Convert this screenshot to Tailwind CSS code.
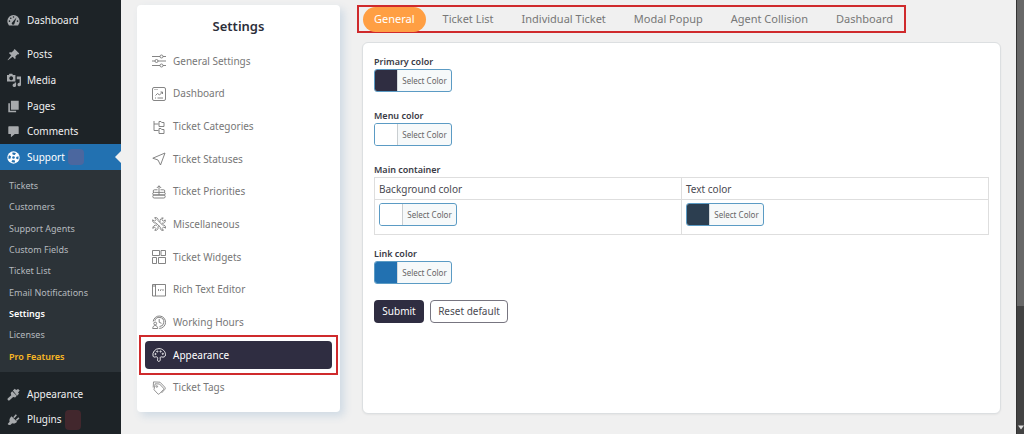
<!DOCTYPE html>
<html lang="en">
<head>
  <meta charset="UTF-8">
  <meta name="viewport" content="width=device-width, initial-scale=1.0">
  <title>Settings - Support</title>
  <script src="https://cdn.jsdelivr.net/npm/@tailwindcss/browser@4"></script>
</head>
<body class="bg-[#f0f0f0] font-['Noto_Sans','Open_Sans',sans-serif] text-[10px]">
  <div class="flex min-h-screen">

    <!-- Admin menu -->
    <nav class="w-[121px] shrink-0 bg-[#1d2327] text-[#f0f0f1]">
      <ul class="pt-[7px]">
        <li class="mb-2">
          <a href="#" class="flex h-[26px] items-center gap-[7px] px-[7px]">
            <svg class="size-[13px]" viewBox="0 0 20 20"><path fill="#a7aaad" d="M3 17.500a9.500 9.500 0 1 1 14 0Z"/><g fill="#1d2327"><circle cx="10" cy="4.500" r="1.200"/><circle cx="5.800" cy="6.500" r="1.200"/><circle cx="3.800" cy="11" r="1.200"/><circle cx="16.200" cy="11" r="1.200"/><path d="M14.500 5.500 8.300 12.500a2.200 2.200 0 1 0 3.300 1.900Z"/></g></svg>
            Dashboard
          </a>
        </li>
        <li>
          <a href="#" class="flex h-[26px] items-center gap-[7px] px-[7px]">
            <svg class="size-[13px] text-[#a7aaad]" viewBox="0 0 20 20" fill="currentColor"><path d="m10.400 3 1.400-1.400 7 7-1.400 1.400-1.300-.2-3.300 3.400c.8 1.500.6 3-.4 4l-3.700-3.700L1.500 19l-.6-.6 5.600-7.100L2.800 7.500c1.100-1 2.600-1.200 4-.4l3.500-3.300Z"/></svg>
            Posts
          </a>
        </li>
        <li>
          <a href="#" class="flex h-[26px] items-center gap-[7px] px-[7px]">
            <svg class="size-[14px] -mr-px text-[#a7aaad]" viewBox="0 0 20 20" fill="currentColor"><path fill-rule="evenodd" d="M0 3h2.500l1-2h4l1 2H12v9H0Zm6 1.800a2.700 2.700 0 1 0 .01 0Z"/><path d="M14 5h6v11.500a2.500 2.500 0 1 1-2-2.400V9h-4ZM11 13.500h2v4a2.500 2.500 0 1 1-2-2.400Z"/></svg>
            Media
          </a>
        </li>
        <li>
          <a href="#" class="flex h-[26px] items-center gap-[7px] px-[7px]">
            <svg class="size-[13px] text-[#a7aaad]" viewBox="0 0 20 20" fill="currentColor"><path d="M6 1h12v14H6ZM2 5h2.500v11.500H14V19H2Z"/></svg>
            Pages
          </a>
        </li>
        <li>
          <a href="#" class="flex h-[25px] items-center gap-[7px] px-[7px]">
            <svg class="size-[13px] text-[#a7aaad]" viewBox="0 0 20 20" fill="currentColor"><path d="M3 2h14a1 1 0 0 1 1 1v10a1 1 0 0 1-1 1h-5l-6 5v-5H3a1 1 0 0 1-1-1V3a1 1 0 0 1 1-1Z"/></svg>
            Comments
          </a>
        </li>
        <li>
          <a href="#" class="relative flex h-[26px] items-center gap-[7px] bg-[#2271b1] px-[7px] text-white">
            <svg class="size-[13px]" viewBox="0 0 20 20"><circle cx="10" cy="10" r="9.500" fill="#fff"/><circle cx="10" cy="10" r="6" fill="none" stroke="#2271b1" stroke-width="3.500" stroke-dasharray="4.700 4.720" stroke-dashoffset="2.350"/><circle cx="10" cy="10" r="2" fill="#2271b1"/></svg>
            Support
            <span class="-ml-1 size-4 rounded bg-[#4b679f]"></span>
            <span class="absolute right-0 border-y-[6px] border-r-[6px] border-y-transparent border-r-[#f0f0f0]"></span>
          </a>
          <ul class="grid h-[202px] grid-rows-9 items-center bg-[#2c3338] px-[9px] py-[5px] text-[9px] text-[#b4b9be]">
            <li><a href="#">Tickets</a></li>
            <li><a href="#">Customers</a></li>
            <li><a href="#">Support Agents</a></li>
            <li><a href="#">Custom Fields</a></li>
            <li><a href="#">Ticket List</a></li>
            <li><a href="#">Email Notifications</a></li>
            <li><a href="#" class="font-semibold text-white">Settings</a></li>
            <li><a href="#">Licenses</a></li>
            <li><a href="#" class="font-semibold text-[#fbb924]">Pro Features</a></li>
          </ul>
        </li>
        <li class="mt-[9px]">
          <a href="#" class="flex h-[26px] items-center gap-[7px] px-[7px]">
            <svg class="size-[13px] text-[#a7aaad]" viewBox="0 0 20 20" fill="currentColor"><path d="m9 4 3-3 2 2 3-1.500L19.500 4 17 7l1.500 2-3 3Z"/><path d="m8 5 7 7-2.500 2.500-3-.5-5.500 5c-1.500 1-4-1-3-3l5.500-5-.8-3.500Z"/></svg>
            Appearance
          </a>
        </li>
        <li>
          <a href="#" class="flex h-[25px] items-center gap-[7px] px-[7px]">
            <svg class="size-[13px] text-[#a7aaad]" viewBox="0 0 20 20" fill="currentColor"><path d="m7 5 8.500 8.500c-2 2.500-5 3.500-7.500 2.300L5.500 18c-1.500 1-3.500.5-4.500-1l3-3.500C3 10.500 4.500 7 7 5Z"/><path d="m9.500 6.500 4-4.500 1.800 1.600-4 4.600ZM13.500 10.500l4-4 1.700 1.800-4.200 4Z"/></svg>
            Plugins
            <span class="-ml-1 h-5 w-4 rounded bg-[#42272d]"></span>
          </a>
        </li>
      </ul>
    </nav>

    <!-- Settings sections -->
    <aside class="ml-4 mt-[5px] w-[203px] shrink-0 self-start rounded bg-white px-2 pb-2 shadow-[4px_4px_8px_#cfdae4]">
      <h2 class="pt-[10px] text-center text-[13px] leading-[22px] font-semibold text-[#2c2e3a]">Settings</h2>
      <ul class="mt-2 grid h-[359px] grid-rows-11 items-center text-[#777]">
        <li>
          <a href="#" class="flex h-7 items-center gap-[7px] px-[7px]">
            <svg class="size-[14px]" viewBox="0 0 14 14" fill="none" stroke="currentColor" stroke-width=".9"><path d="M0 2.500h8M11 2.500h3M0 7h3M6 7h8M0 11.500h8M11 11.500h3"/><circle cx="9.500" cy="2.500" r="1.500"/><circle cx="4.500" cy="7" r="1.500"/><circle cx="9.500" cy="11.500" r="1.500"/></svg>
            General Settings
          </a>
        </li>
        <li>
          <a href="#" class="flex h-7 items-center gap-[7px] px-[7px]">
            <svg class="size-[14px]" viewBox="0 0 14 14" fill="none" stroke="currentColor" stroke-width=".9"><rect x=".5" y=".5" width="13" height="13" rx="1.500"/><path d="M3.500 8.500 5.500 6.500l2 1.500L10.500 5M8.500 5h2v2M3 11h1M5.500 11h5.500M2.500 2.500h1M4.500 2.500h1"/></svg>
            Dashboard
          </a>
        </li>
        <li>
          <a href="#" class="flex h-7 items-center gap-[7px] px-[7px]">
            <svg class="size-[14px]" viewBox="0 0 14 14" fill="none" stroke="currentColor" stroke-width=".9"><path d="M2 1v9.500h4.500M2 4h4.500M7 1.500h2l.7 1h2.300v4H7ZM7 8.500h2l.7 1h2.300v4H7Z"/></svg>
            Ticket Categories
          </a>
        </li>
        <li>
          <a href="#" class="flex h-7 items-center gap-[7px] px-[7px]">
            <svg class="size-[14px]" viewBox="0 0 14 14" fill="none" stroke="currentColor" stroke-width=".9" stroke-linejoin="round"><path d="M13 1 .8 6.200 6 8l2.500 5Z"/></svg>
            Ticket Statuses
          </a>
        </li>
        <li>
          <a href="#" class="flex h-7 items-center gap-[7px] px-[7px]">
            <svg class="size-[14px]" viewBox="0 0 14 14" fill="none" stroke="currentColor" stroke-width=".9"><path d="M7 10V.8M4.800 3 7 .8 9.200 3M5.500 4.800h-3a1.300 1.300 0 0 0 0 2.600h9a1.300 1.300 0 0 0 0-2.600h-3M2 7.400a1.300 1.300 0 0 0 0 2.600h10a1.300 1.300 0 0 0 0-2.600"/><rect x=".8" y="10" width="12.400" height="3" rx="1.400"/></svg>
            Ticket Priorities
          </a>
        </li>
        <li>
          <a href="#" class="flex h-7 items-center gap-[7px] px-[7px]">
            <svg class="size-[14px]" viewBox="0 0 14 14" fill="none" stroke="currentColor" stroke-width=".9" stroke-linejoin="round"><path d="m.7 2.800 1.800 1.400 1.600-1.600L2.700.7c2-.6 4 1 3.400 3l4.400 4.400c2-.6 3.600 1.200 2.900 3.100l-1.700-1.300-1.600 1.600 1.300 1.800c-2 .6-3.600-1.100-3.100-3.100L4 5.900C2 6.400.1 4.800.7 2.800Z"/><path d="M8 5.200c-.5-2.200 1-4.700 3.200-4.300L9.900 2.700l1.500 1.500 1.800-1.300c.6 2-1 3.900-3.400 3.300M5 8.200c-2-.6-4.500 1-4.200 3.200l1.700-1.300 1.500 1.500-1.200 1.700c2.200.5 3.800-1.300 3.200-3.600l1-1"/></svg>
            Miscellaneous
          </a>
        </li>
        <li>
          <a href="#" class="flex h-7 items-center gap-[7px] px-[7px]">
            <svg class="size-[14px]" viewBox="0 0 14 14" fill="none" stroke="currentColor" stroke-width=".9"><path d="M.5.500h7v5h-7ZM9 .5h4.500v5H9ZM.5 7.500h4v6h-4ZM6.500 7.500h7v6h-7Z"/></svg>
            Ticket Widgets
          </a>
        </li>
        <li>
          <a href="#" class="flex h-7 items-center gap-[7px] px-[7px]">
            <svg class="size-[14px]" viewBox="0 0 14 14" fill="none" stroke="currentColor" stroke-width=".9"><path d="M.5 1.500h13v11.500H.5ZM3.500 1.500V13M.5 3h3"/><path stroke-width=".8" d="M7 6 6 7l1 1M10.500 6l1 1-1 1M9.200 6l-.9 2"/></svg>
            Rich Text Editor
          </a>
        </li>
        <li>
          <a href="#" class="flex h-7 items-center gap-[7px] px-[7px]">
            <svg class="size-[14px]" viewBox="0 0 14 14" fill="none" stroke="currentColor" stroke-width=".9"><path d="M1.200 6.500a6.200 6.200 0 1 1 6 6.900M2.800 5.800a4.600 4.600 0 1 1 4.700 5.800M7.200 4v3.300l2.300 1"/><circle cx="3.200" cy="8.500" r="1.400"/><path d="M.7 13.500c0-4 5-4 5 0Z"/></svg>
            Working Hours
          </a>
        </li>
        <li class="relative">
          <a href="#" class="flex h-7 items-center gap-[7px] rounded bg-[#2f2d41] px-[7px] text-white">
            <svg class="size-[14px]" viewBox="0 0 14 14" fill="none" stroke="currentColor" stroke-width=".9"><path d="M6.500 13.400c-1.300-.4-1-2-.8-2.800.2-1.200-.8-2-2-1.700-1.200.4-2.200.2-2.700-.8A6.200 6.200 0 0 1 7 .6c3.600 0 6.500 2.700 6.500 6.100 0 2.300-2.200 2.800-3.800 2.200-1.100-.3-1.700.3-1.500 1.300.3 1.300 0 3.500-1.700 3.200Z"/><circle cx="3.500" cy="6" r=".6"/><circle cx="5.300" cy="3.500" r=".6"/><circle cx="8.600" cy="3.500" r=".6"/><circle cx="10.800" cy="5.800" r=".6"/></svg>
            Appearance
          </a>
          <span class="pointer-events-none absolute -inset-x-[6px] -inset-y-[6px] border-2 border-[#cf2a2c]"></span>
        </li>
        <li>
          <a href="#" class="flex h-7 items-center gap-[7px] px-[7px]">
            <svg class="size-[14px]" viewBox="0 0 14 14" fill="none" stroke="currentColor" stroke-width=".8" stroke-linejoin="round"><path d="M3.200 2.800 7.500 3l4 4.200a1 1 0 0 1 0 1.400l-4.200 4.300a1 1 0 0 1-1.400 0L2 8.700Z"/><path d="M1.200 6.500 1.500.900 8 1.200l4.800 5a1.600 1.600 0 0 1 0 2.200L9.500 12"/><circle cx="4.800" cy="5.500" r=".8"/></svg>
            Ticket Tags
          </a>
        </li>
      </ul>
    </aside>

    <!-- Appearance form -->
    <main class="ml-[17px] mr-[15px] flex grow flex-col pt-[5px] pb-5">
      <nav class="mb-[9px] flex h-7 items-center gap-[6px] self-start border-2 border-[#cf2a2c] px-1 text-[11px] text-[#777]">
        <a href="#" class="flex h-[25px] items-center rounded-full bg-[#ff9f43] px-[11px] text-white">General</a>
        <a href="#" class="px-[11px]">Ticket List</a>
        <a href="#" class="px-[11px]">Individual Ticket</a>
        <a href="#" class="px-[11px]">Modal Popup</a>
        <a href="#" class="px-[11px]">Agent Collision</a>
        <a href="#" class="pl-[11px] pr-[7px]">Dashboard</a>
      </nav>

      <form class="ml-[5px] flex grow flex-col items-start rounded-md border border-[#dcdfe1] bg-white p-[11px] text-[#4a4a52] shadow-xs">
        <label for="primary" class="text-[9px] leading-[15px] font-semibold text-[#3a3b46]">Primary color</label>
        <button type="button" id="primary" class="mb-4 flex h-[23px] w-[78px] overflow-hidden rounded-[3px] border border-[#5b9bc4] bg-[#f6f9fa] text-[8px] leading-[21px] text-[#666]">
          <span class="h-full w-[23px] border-r border-[#d5dadd] bg-[#2f2d41]"></span><span class="grow">Select Color</span>
        </button>

        <label for="menu" class="text-[9px] leading-[15px] font-semibold text-[#3a3b46]">Menu color</label>
        <button type="button" id="menu" class="mb-4 flex h-[23px] w-[78px] overflow-hidden rounded-[3px] border border-[#5b9bc4] bg-[#f6f9fa] text-[8px] leading-[21px] text-[#666]">
          <span class="h-full w-[23px] border-r border-[#c9ced1] bg-white"></span><span class="grow">Select Color</span>
        </button>

        <h3 id="container" class="text-[9px] leading-[15px] font-semibold text-[#3a3b46]">Main container</h3>
        <table aria-labelledby="container" class="mb-[11px] w-full table-fixed border-collapse border border-[#dedede] text-left">
          <tr class="h-[22px]">
            <th class="border border-[#dedede] px-1 leading-5 font-normal"><label for="background">Background color</label></th>
            <th class="border border-[#dedede] px-1 leading-5 font-normal"><label for="text">Text color</label></th>
          </tr>
          <tr class="h-[35px]">
            <td class="border border-[#dedede] px-1 pt-[3px] pb-2">
              <button type="button" id="background" class="flex h-[23px] w-[78px] overflow-hidden rounded-[3px] border border-[#5b9bc4] bg-[#f6f9fa] text-[8px] leading-[21px] text-[#666]">
                <span class="h-full w-[23px] border-r border-[#c9ced1] bg-white"></span><span class="grow">Select Color</span>
              </button>
            </td>
            <td class="border border-[#dedede] px-1 pt-[3px] pb-2">
              <button type="button" id="text" class="flex h-[23px] w-[78px] overflow-hidden rounded-[3px] border border-[#5b9bc4] bg-[#f6f9fa] text-[8px] leading-[21px] text-[#666]">
                <span class="h-full w-[23px] border-r border-[#d5dadd] bg-[#2c3e50]"></span><span class="grow">Select Color</span>
              </button>
            </td>
          </tr>
        </table>

        <label for="link" class="text-[9px] leading-[15px] font-semibold text-[#3a3b46]">Link color</label>
        <button type="button" id="link" class="mb-4 flex h-[23px] w-[78px] overflow-hidden rounded-[3px] border border-[#5b9bc4] bg-[#f6f9fa] text-[8px] leading-[21px] text-[#666]">
          <span class="h-full w-[23px] border-r border-[#d5dadd] bg-[#2271b1]"></span><span class="grow">Select Color</span>
        </button>

        <div class="flex gap-[6px]">
          <button type="submit" class="h-[23px] w-[50px] rounded bg-[#2f2d41] text-white">Submit</button>
          <button type="reset" class="h-[23px] w-[78px] rounded border border-[#777580] bg-white">Reset default</button>
        </div>
      </form>
    </main>

    <!-- Scrollbar -->
    <div class="flex w-2 shrink-0 flex-col items-end border-l border-[#333] bg-[#424242]">
      <div class="h-[306px] w-full bg-[#686868]"></div>
      <svg class="mt-auto mb-1 h-[5px] w-[6px]" viewBox="0 0 6 5"><path d="M0 .5h6L3 4.500Z" fill="#ddd"/></svg>
    </div>
  </div>
</body>
</html>
